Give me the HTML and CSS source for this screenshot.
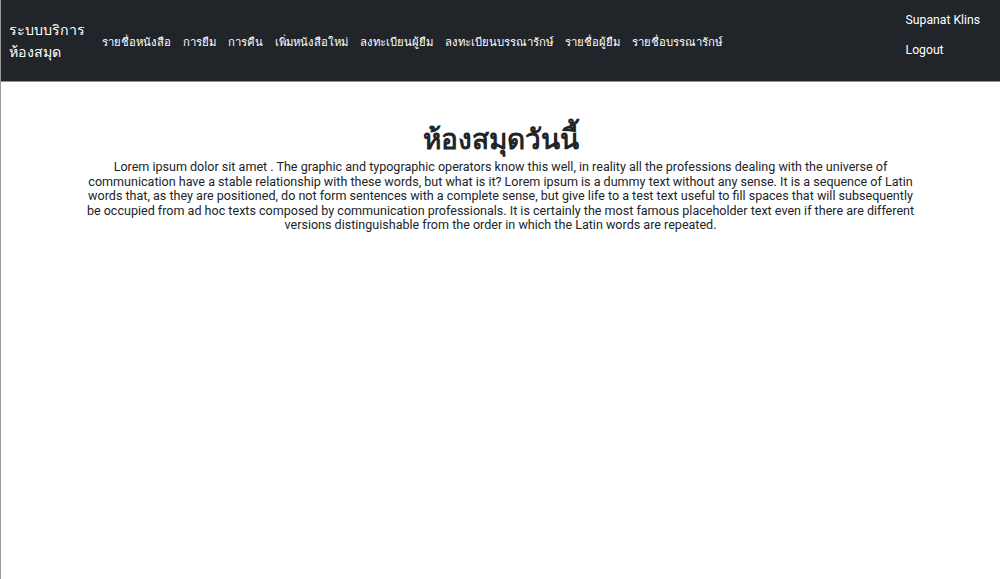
FILE: index.html
```html
<!DOCTYPE html>
<html lang="th">
<head>
<meta charset="utf-8">
<title>ห้องสมุด</title>
<link rel="stylesheet" href="styles.css">
</head>
<body>
<nav class="navbar">
  <div class="brand">ระบบบริการ<br>ห้องสมุด</div>
  <ul class="nav-links">
    <li><a href="#">รายชื่อหนังสือ</a></li>
    <li><a href="#">การยืม</a></li>
    <li><a href="#">การคืน</a></li>
    <li><a href="#">เพิ่มหนังสือใหม่</a></li>
    <li><a href="#">ลงทะเบียนผู้ยืม</a></li>
    <li><a href="#">ลงทะเบียนบรรณารักษ์</a></li>
    <li><a href="#">รายชื่อผู้ยืม</a></li>
    <li><a href="#">รายชื่อบรรณารักษ์</a></li>
  </ul>
  <div class="user">
    <a href="#">Supanat Klins</a>
    <a href="#">Logout</a>
  </div>
</nav>
<main class="content">
  <h1 class="title">ห้องสมุดวันนี้</h1>
  <p class="intro">Lorem ipsum dolor sit amet . The graphic and typographic operators know this well, in reality all the professions dealing with the universe of communication have a stable relationship with these words, but what is it? Lorem ipsum is a dummy text without any sense. It is a sequence of Latin words that, as they are positioned, do not form sentences with a complete sense, but give life to a test text useful to fill spaces that will subsequently be occupied from ad hoc texts composed by communication professionals. It is certainly the most famous placeholder text even if there are different versions distinguishable from the order in which the Latin words are repeated.</p>
</main>
</body>
</html>
```
FILE: styles.css
```css
html, body {
  margin: 0;
  padding: 0;
  height: 100%;
}
body {
  font-family: Roboto, "Noto Sans", "DejaVu Sans", sans-serif;
  color: #212529;
  background: #fff;
  border-left: 1px solid #9a9a9a;
  box-sizing: border-box;
}
.navbar {
  display: flex;
  align-items: center;
  height: 81px;
  background: #212529;
  border-bottom: 1px solid #8f8f8f;
  padding: 0 8px 0 8px;
  box-sizing: content-box;
}
.brand {
  color: #fff;
  font-size: 14.2px;
  line-height: 22px;
  margin-right: 17px;
}
.nav-links {
  display: flex;
  list-style: none;
  margin: 0;
  padding: 0;
  gap: 12px;
  flex: 1;
}
.nav-links a {
  color: #fff;
  text-decoration: none;
  font-size: 11.35px;
}
.user {
  display: flex;
  flex-direction: column;
  gap: 16px;
  padding-right: 12px;
  align-self: flex-start;
  padding-top: 13px;
}
.user a {
  color: #fff;
  text-decoration: none;
  font-size: 12.2px;
  line-height: 14px;
}
.content {
  max-width: 830px;
  margin: 0 auto;
  text-align: center;
  padding-top: 38px;
}
.title {
  font-size: 28px;
  font-weight: 700;
  line-height: 40px;
  margin: 0;
}
.intro {
  font-size: 12.55px;
  line-height: 14.6px;
  margin: 0;
}
```
